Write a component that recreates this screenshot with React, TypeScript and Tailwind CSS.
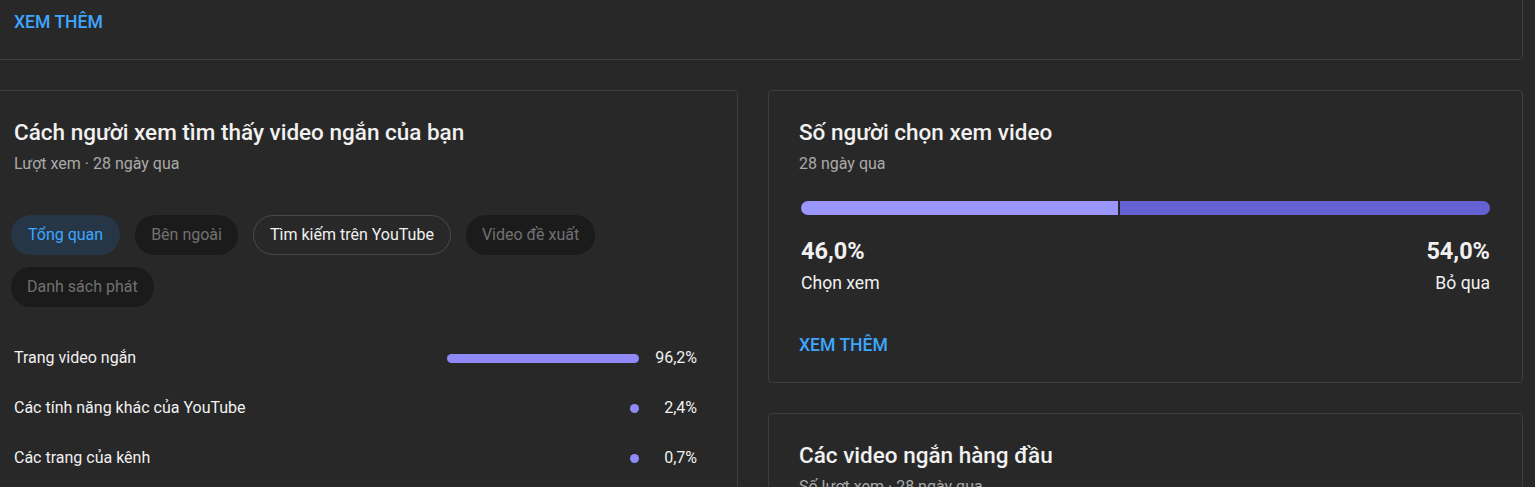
import React from 'react';

const font = { fontFamily: 'Roboto, "Noto Sans", sans-serif' };

const chips = [
    { label: 'Tổng quan', kind: 'active' },
    { label: 'Bên ngoài', kind: 'off' },
    { label: 'Tìm kiếm trên YouTube', kind: 'outline' },
    { label: 'Video đề xuất', kind: 'off' },
    { label: 'Danh sách phát', kind: 'off' },
];

const sources = [
    { label: 'Trang video ngắn', value: 96.2 },
    { label: 'Các tính năng khác của YouTube', value: 2.4 },
    { label: 'Các trang của kênh', value: 0.7 },
];

const chipClass = (kind: string) => {
    if (kind === 'active') return 'bg-[#263647] text-[#3ea6ff] px-[17px]';
    if (kind === 'outline') return 'border border-[#4a4a4a] text-[#f1f1f1] px-4';
    return 'bg-[#1b1b1b] text-[#717171] px-4';
};

const SeeMore = () => (
    <div className="text-[17.6px] leading-6 font-medium text-[#3ea6ff] uppercase">XEM THÊM</div>
);

const Card = ({ children, className = '' }: { children: React.ReactNode; className?: string }) => (
    <div className={`border border-[#3e3e3e] rounded-[4px] px-[30px] ${className}`}>{children}</div>
);

const Header = ({ title, sub }: { title: string; sub: string }) => (
    <div>
        <h2 className="text-[22.5px] leading-7 font-medium text-[#f1f1f1]">{title}</h2>
        <div className="mt-[8px] text-[16px] leading-5 text-[#aaaaaa]">{sub}</div>
    </div>
);

export default function App() {
    return (
        <div className="w-full h-[487px] overflow-hidden bg-[#282828]" style={font}>
            <div className="-ml-[17px] w-[1540px]">
                <Card className="-mt-[20px] pt-[29px] pb-[25px]">
                    <SeeMore />
                </Card>

                <div className="mt-[30px] flex gap-[30px] items-start">
                    {/* traffic sources */}
                    <Card className="w-[755px] pt-[27px] pb-[40px]">
                        <Header title="Cách người xem tìm thấy video ngắn của bạn" sub="Lượt xem · 28 ngày qua" />
                        <div className="mt-[41px] -ml-[3px] flex flex-wrap gap-x-[15px] gap-y-[12px]">
                            {chips.map((c) => (
                                <div
                                    key={c.label}
                                    className={`h-10 rounded-full flex items-center text-[16px] ${chipClass(c.kind)}`}>
                                    {c.label}
                                </div>
                            ))}
                        </div>
                        <div className="mt-[26px] pr-[10px]">
                            {sources.map((s) => (
                                <div key={s.label} className="h-[50px] flex items-center text-[16px] text-[#f1f1f1]">
                                    <div className="flex-1">{s.label}</div>
                                    <div className="w-[200px] flex justify-end">
                                        <div
                                            className="h-[9px] min-w-[9px] rounded-full bg-[#8f8af7]"
                                            style={{ width: `${s.value * 2}px` }}
                                        />
                                    </div>
                                    <div className="w-[58px] text-right">{s.value.toFixed(1).replace('.', ',')}%</div>
                                </div>
                            ))}
                        </div>
                    </Card>

                    <div className="w-[755px] flex flex-col gap-[30px]">
                        {/* choose to view */}
                        <Card className="pt-[27px] pb-[25px]">
                            <Header title="Số người chọn xem video" sub="28 ngày qua" />
                            <div className="mt-[27px] mx-[2px] flex h-[14px] gap-[2px]">
                                <div className="w-[46%] h-full rounded-l-full bg-[#9a96fc]" />
                                <div className="flex-1 h-full rounded-r-full bg-[#6461d2]" />
                            </div>
                            <div className="mx-[2px] mt-[22px] flex justify-between">
                                <div>
                                    <div className="text-[23.5px] leading-7 font-bold text-[#f1f1f1]">46,0%</div>
                                    <div className="mt-[6px] text-[17.6px] leading-6 text-[#f1f1f1]">Chọn xem</div>
                                </div>
                                <div className="text-right">
                                    <div className="text-[23.5px] leading-7 font-bold text-[#f1f1f1]">54,0%</div>
                                    <div className="mt-[6px] text-[17.6px] leading-6 text-[#f1f1f1]">Bỏ qua</div>
                                </div>
                            </div>
                            <div className="mt-[38px]">
                                <SeeMore />
                            </div>
                        </Card>

                        {/* top shorts */}
                        <Card className="pt-[27px] pb-[40px]">
                            <Header title="Các video ngắn hàng đầu" sub="Số lượt xem · 28 ngày qua" />
                        </Card>
                    </div>
                </div>
            </div>
        </div>
    );
}
